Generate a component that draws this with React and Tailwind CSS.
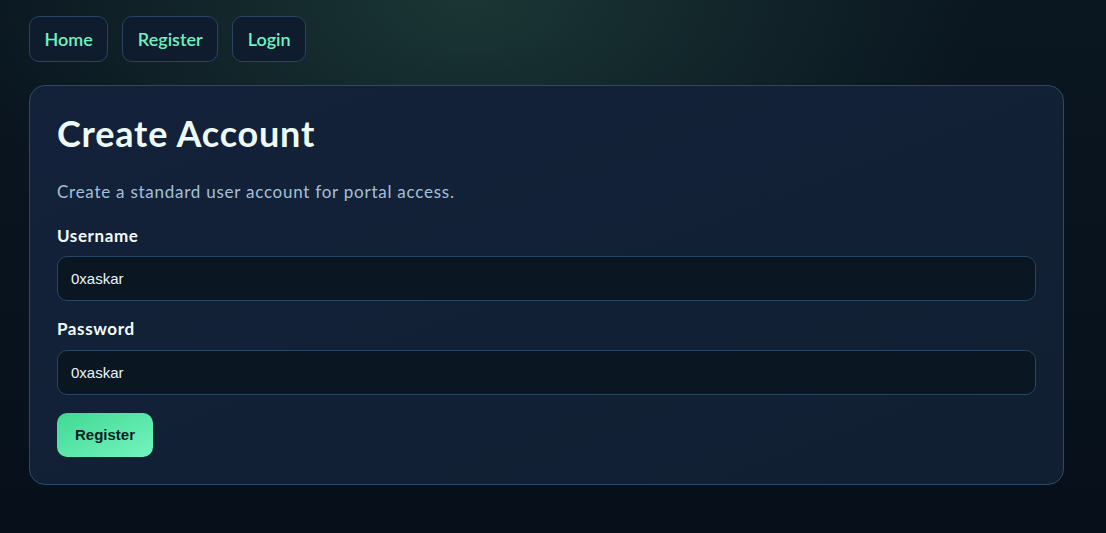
export default function App() {
  const navItems = ['Home', 'Register', 'Login']

  return (
    <div
      className="min-h-[533px] w-full bg-[#07101a] pl-[29px] pt-[16px] pb-[48px]"
      style={{
        fontFamily: 'Lato, "Open Sans", sans-serif',
        backgroundImage:
          'radial-gradient(ellipse 520px 300px at 470px 0px, rgba(40,80,70,0.55), rgba(10,25,35,0) 100%), linear-gradient(180deg, #0a1620 0%, #07101a 100%)',
      }}
    >
      <nav className="flex gap-[14px]">
        {navItems.map((item) => (
          <a
            key={item}
            href="#"
            className="flex h-[46px] items-center rounded-[10px] border border-[#284460] bg-[#0e1c2e] px-[14.5px] text-[18px] font-semibold text-[#6ff2c0]"
          >
            {item}
          </a>
        ))}
      </nav>

      <section className="mt-[23px] w-[1035px] rounded-[16px] border border-[#2a4b68] bg-gradient-to-br from-[#13223a] to-[#101f31] px-[27px] pt-[26px] pb-[27px]">
        <h1 className="text-[36px] font-bold leading-[43px] tracking-[0.8px] text-[#eefaf6]">Create Account</h1>
        <p className="mt-[25px] text-[17px] leading-[24px] tracking-[0.75px] text-[#a4c0d8]">
          Create a standard user account for portal access.
        </p>

        <label className="mt-[20px] block text-[17px] font-bold leading-[24px] tracking-[0.6px] text-[#f2fbf8]">Username</label>
        <input
          type="text"
          defaultValue="0xaskar"
          className="mt-[8px] block h-[45px] w-[979px] rounded-[10px] border border-[#284660] bg-[#0a1622] px-[13px] text-[15px] text-[#eaf3f8] outline-none"
          style={{ fontFamily: '"Liberation Sans", Arial, sans-serif' }}
        />

        <label className="mt-[16px] block text-[17px] font-bold leading-[24px] tracking-[0.6px] text-[#f2fbf8]">Password</label>
        <input
          type="text"
          defaultValue="0xaskar"
          className="mt-[9px] block h-[45px] w-[979px] rounded-[10px] border border-[#284660] bg-[#0a1622] px-[13px] text-[15px] text-[#eaf3f8] outline-none"
          style={{ fontFamily: '"Liberation Sans", Arial, sans-serif' }}
        />

        <button
          className="mt-[18px] h-[44px] rounded-[10px] bg-gradient-to-br from-[#3fd893] to-[#72f5c0] px-[18px] text-[15px] font-bold text-[#0c1d26]"
          style={{ fontFamily: '"Liberation Sans", Arial, sans-serif' }}
        >
          Register
        </button>
      </section>
    </div>
  )
}
